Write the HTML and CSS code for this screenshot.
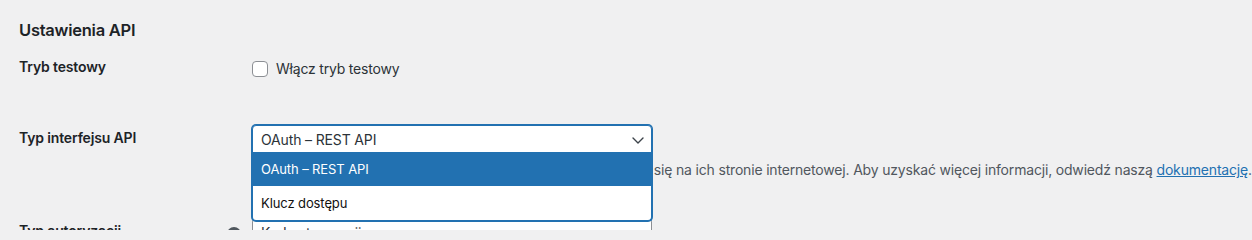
FILE: index.html
```html
<!DOCTYPE html>
<html lang="pl">
<head>
<meta charset="utf-8">
<title>Ustawienia API</title>
<link rel="stylesheet" href="styles.css">
</head>
<body>
<div class="wrap">
  <h2 class="title">Ustawienia API</h2>
  <table class="form-table">
    <tr class="row-test">
      <th>Tryb testowy</th>
      <td>
        <label class="check"><input type="checkbox" class="checkbox">Włącz tryb testowy</label>
      </td>
    </tr>
    <tr class="row-api">
      <th>Typ interfejsu API</th>
      <td>
        <div class="select is-open">
          <span class="select-value">OAuth – REST API</span>
          <svg class="chevron" width="12" height="7" viewBox="0 0 12 7" aria-hidden="true"><path d="M1 1l5 5 5-5" fill="none" stroke="#3c434a" stroke-width="1.4" stroke-linecap="round" stroke-linejoin="round"/></svg>
          <ul class="listbox">
            <li class="option is-active">OAuth – REST API</li>
            <li class="option">Klucz dostępu</li>
          </ul>
        </div>
        <p class="description"><span class="desc-lead">Dane uwierzytelniające dla API otrzymasz po zarejestrowaniu </span>się na ich stronie internetowej. Aby uzyskać więcej informacji, odwiedź naszą <a href="#">dokumentację</a>.</p>
      </td>
    </tr>
    <tr class="row-auth">
      <th><span class="th-label">Typ autoryzacji</span><span class="help-tip">?</span></th>
      <td>
        <div class="select">
          <span class="select-value">Kod autoryzacji</span>
          <svg class="chevron" width="12" height="7" viewBox="0 0 12 7" aria-hidden="true"><path d="M1 1l5 5 5-5" fill="none" stroke="#3c434a" stroke-width="1.4" stroke-linecap="round" stroke-linejoin="round"/></svg>
        </div>
      </td>
    </tr>
  </table>
</div>
</body>
</html>
```
FILE: styles.css
```css
html, body {
  margin: 0;
  padding: 0;
  background: #f0f0f1;
  height: 230px;
  overflow: hidden;
}
body {
  font-family: Inter, "Noto Sans", "Liberation Sans", sans-serif;
  font-size: 14px;
  color: #1d2327;
}
.wrap {
  padding: 20px 0 0 19px;
}
.title {
  margin: 0;
  font-size: 16.5px;
  letter-spacing: -0.25px;
  line-height: 20px;
  font-weight: 600;
  color: #1d2327;
}
.form-table {
  border-collapse: collapse;
  border-spacing: 0;
  width: 1223px;
  table-layout: fixed;
}
.form-table th {
  width: 223px;
  padding: 19px 0 0 0;
  text-align: left;
  vertical-align: top;
  font-weight: 600;
  font-size: 14px;
  letter-spacing: -0.15px;
  line-height: 18px;
  color: #1d2327;
}
.form-table td {
  padding: 15px 0 0 10px;
  vertical-align: top;
}
.row-test th { padding-top: 18px; }
.row-test td { padding-top: 21px; height: 49px; }
.row-api td { height: 78px; }

.check {
  display: flex;
  align-items: center;
  height: 16px;
  line-height: 16px;
  color: #2c3338;
  letter-spacing: -0.2px;
}
.checkbox {
  appearance: none;
  -webkit-appearance: none;
  width: 16px;
  height: 16px;
  margin: 0 8px 0 0;
  border: 1px solid #8c8f94;
  border-radius: 4px;
  background: #fff;
  box-sizing: border-box;
}

.select {
  position: relative;
  box-sizing: border-box;
  width: 400px;
  height: 30px;
  padding: 0 7px 0 8px;
  display: flex;
  align-items: center;
  justify-content: space-between;
  background: #fff;
  border: 1px solid #8c8f94;
  border-radius: 4px;
  color: #2c3338;
  font-size: 14px;
  letter-spacing: -0.15px;
}
.select.is-open {
  border-color: #2271b1;
  box-shadow: 0 0 0 1px #2271b1;
  z-index: 2;
}
.select-value {
  line-height: 28px;
}
.chevron {
  display: block;
  margin-top: 1px;
}
.listbox {
  position: absolute;
  top: 25px;
  left: -2px;
  right: -2px;
  margin: 0;
  padding: 1px 0 0 0;
  list-style: none;
  background: #fff;
  border: 2px solid #2271b1;
  border-top: 0;
  border-radius: 0 0 5px 5px;
}
.option {
  height: 34px;
  line-height: 34px;
  padding-left: 8px;
  font-size: 13px;
  letter-spacing: -0.1px;
  color: #111;
}
.option.is-active {
  background: #2271b1;
  color: #fff;
}
.description {
  margin: 4px 0 0 0;
  font-size: 14px;
  line-height: 21px;
  letter-spacing: -0.18px;
  color: #50575e;
  white-space: nowrap;
}
.desc-lead {
  letter-spacing: -0.14px;
}
.description a {
  color: #2271b1;
  text-decoration: underline;
}
.th-label {
  display: inline-block;
}
.help-tip {
  float: right;
  margin: 5px 1px 0 0;
  width: 14px;
  height: 14px;
  border-radius: 50%;
  background: #50575e;
  color: #f0f0f1;
  font-size: 11px;
  line-height: 14px;
  text-align: center;
  font-weight: 700;
  letter-spacing: 0;
}
```
